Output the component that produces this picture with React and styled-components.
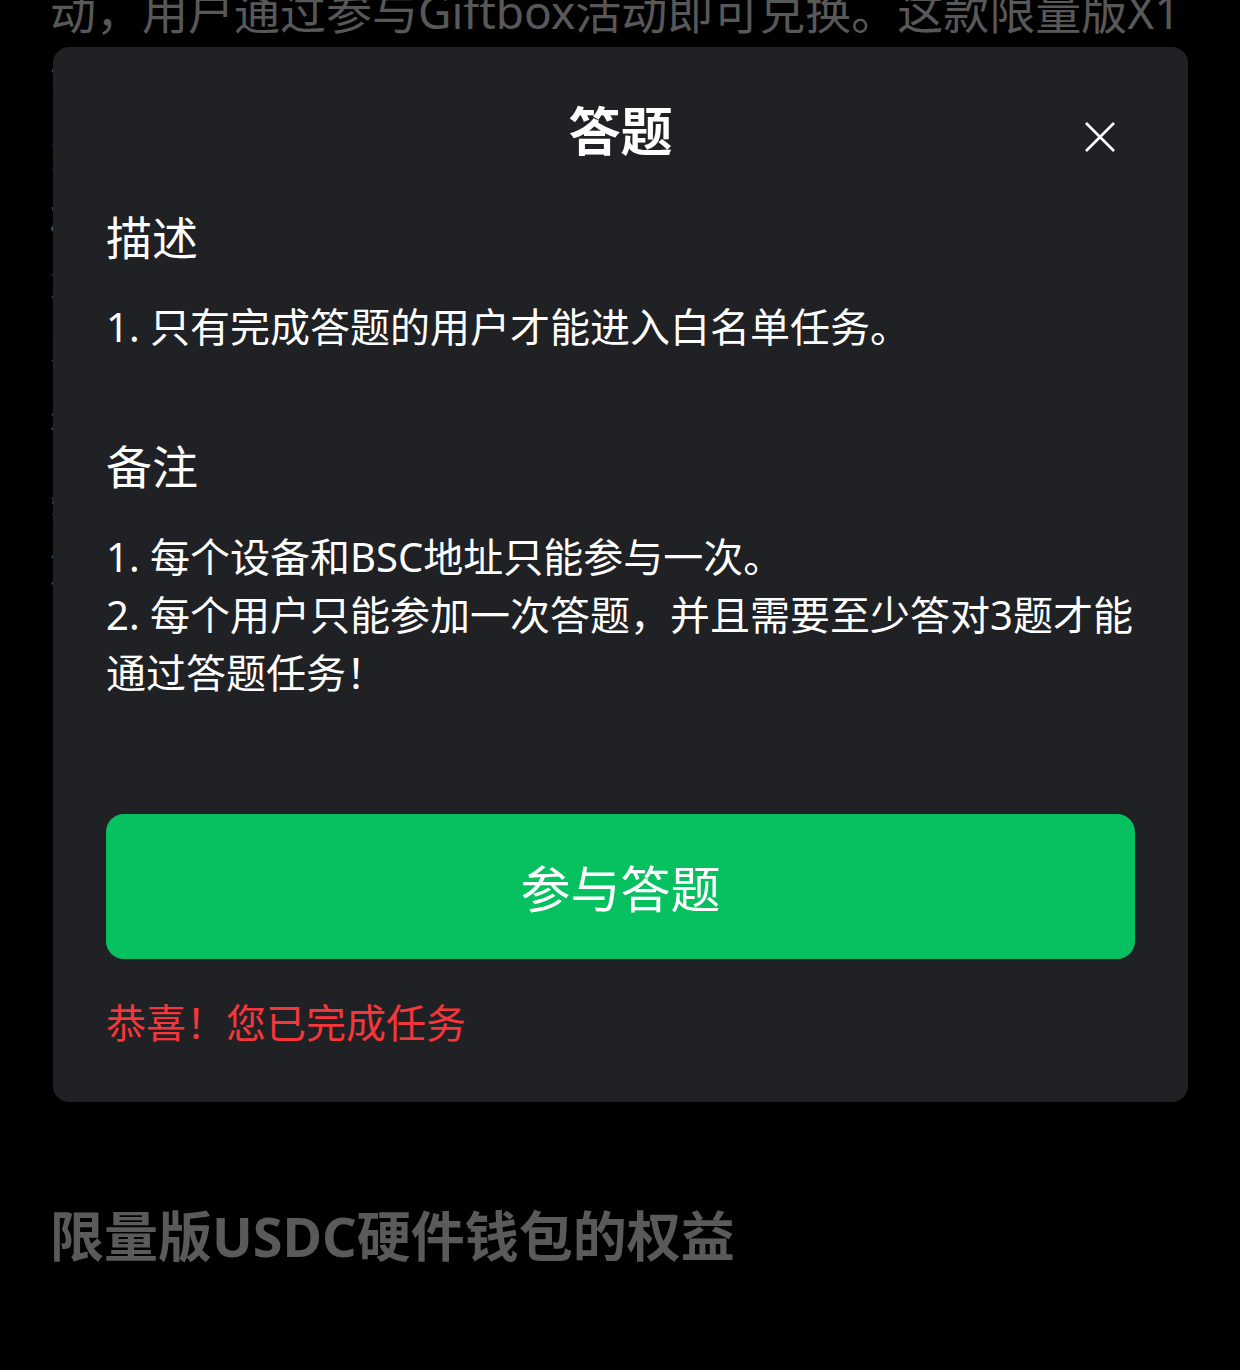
import React from 'react';
import styled, { createGlobalStyle } from 'styled-components';

const GlobalStyle = createGlobalStyle`
    html, body {
        margin: 0;
        padding: 0;
        background: #000;
    }
    body {
        font-family: 'Noto Sans', 'Noto Sans CJK SC', sans-serif;
        overflow: hidden;
    }
`;

const Page = styled.div`
    margin-top: -23px;
    padding: 0 50px;
    min-height: 1370px;
    box-sizing: border-box;
`;

const Article = styled.p`
    margin: 0;
    height: 1173px;
    overflow: hidden;
    color: #b0b0b0;
    font-size: 46px;
    line-height: 69px;
`;

const SectionHeading = styled.h2`
    margin: 48px 0 0 0;
    color: #b4b4b4;
    font-size: 54px;
    font-weight: 700;
    line-height: 76px;
`;

const Overlay = styled.div`
    position: fixed;
    inset: 0;
    background: rgba(0, 0, 0, 0.5);
`;

const Dialog = styled.div`
    position: absolute;
    top: 47px;
    left: 53px;
    width: 1135px;
    box-sizing: border-box;
    padding: 48px 53px 50px;
    border-radius: 16px;
    background: #202125;
    color: #fff;
`;

const DialogHeader = styled.div`
    position: relative;
    text-align: center;
`;

const DialogTitle = styled.h1`
    margin: 0;
    font-size: 52px;
    font-weight: 700;
    line-height: 72px;
`;

const CloseButton = styled.button`
    position: absolute;
    top: 27px;
    right: 20px;
    width: 30px;
    height: 30px;
    padding: 0;
    border: 0;
    background: transparent;
    cursor: pointer;
    display: flex;
`;

const BlockTitle = styled.h3`
    margin: ${(p) => p.$gap}px 0 0 0;
    font-size: 46px;
    font-weight: 400;
    line-height: 64px;
`;

const BlockText = styled.div`
    margin-top: ${(p) => p.$gap}px;
    font-size: 40px;
    line-height: 58px;
`;

const PrimaryButton = styled.button`
    display: flex;
    align-items: center;
    justify-content: center;
    width: 100%;
    height: 145px;
    margin-top: 112px;
    border: 0;
    border-radius: 18px;
    background: #07c160;
    color: #fff;
    font-family: inherit;
    font-size: 50px;
    cursor: pointer;
`;

const SuccessText = styled.div`
    margin-top: 35px;
    color: #f5363a;
    font-size: 40px;
    line-height: 58px;
`;

const CloseIcon = () => (
    <svg width="30" height="30" viewBox="0 0 30 30" fill="none">
        <path d="M1 1L29 29M29 1L1 29" stroke="#fff" strokeWidth="2.6" />
    </svg>
);

const App = () => {
    return (
        <>
            <GlobalStyle />
            <Page>
                <Article>
                    动，用户通过参与Giftbox活动即可兑换。这款限量版X1钱包由官方联合推出，
                    采用全新的外观设计，支持多链资产管理，并为持有者提供专属的链上身份标识与社区权益。
                    每位用户在活动期间仅可兑换一次，兑换成功后将在活动结束后统一发放，请留意站内通知。
                    活动数量有限，先到先得，兑换完毕即止。所有资产均由用户自行保管，平台不会以任何方式索取助记词或私钥。
                    如有疑问，请通过官方渠道联系客服，谨防诈骗。活动最终解释权归主办方所有。
                </Article>
                <SectionHeading>限量版USDC硬件钱包的权益</SectionHeading>
            </Page>
            <Overlay>
                <Dialog>
                    <DialogHeader>
                        <DialogTitle>答题</DialogTitle>
                        <CloseButton aria-label="关闭">
                            <CloseIcon />
                        </CloseButton>
                    </DialogHeader>

                    <BlockTitle $gap={38}>描述</BlockTitle>
                    <BlockText $gap={29}>1. 只有完成答题的用户才能进入白名单任务。</BlockText>

                    <BlockTitle $gap={78}>备注</BlockTitle>
                    <BlockText $gap={30}>
                        1. 每个设备和BSC地址只能参与一次。
                        <br />
                        2. 每个用户只能参加一次答题，并且需要至少答对3题才能通过答题任务！
                    </BlockText>

                    <PrimaryButton>参与答题</PrimaryButton>
                    <SuccessText>恭喜！您已完成任务</SuccessText>
                </Dialog>
            </Overlay>
        </>
    );
};

export default App;
